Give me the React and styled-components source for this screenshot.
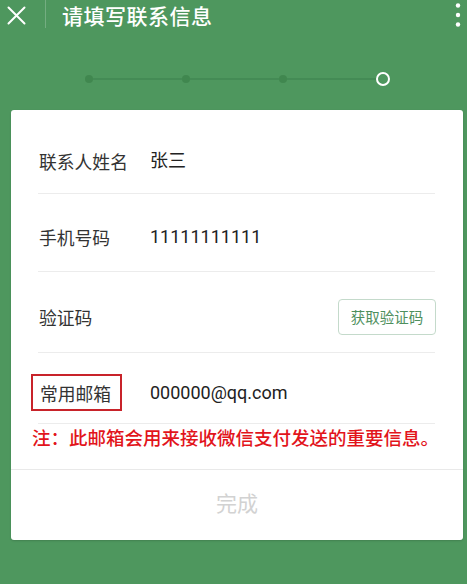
import React from "react"
import styled, { createGlobalStyle } from "styled-components"

const GlobalStyle = createGlobalStyle`
  html, body {
    margin: 0;
    padding: 0;
    background: #4e975e;
  }
  body {
    font-family: "Noto Sans CJK SC", "Noto Sans", sans-serif;
  }
`

const Page = styled.div`
  width: 467px;
  height: 584px;
  background: #4e975e;
  overflow: hidden;
`

const Header = styled.div`
  height: 30px;
  display: flex;
  align-items: center;
  padding-left: 7px;
  padding-right: 6px;
  color: #fff;
`

const CloseButton = styled.div`
  width: 19px;
  height: 19px;
  display: flex;
`

const Separator = styled.div`
  width: 1px;
  height: 28px;
  align-self: flex-start;
  margin-left: 19px;
  background: rgba(255, 255, 255, 0.22);
`

const Title = styled.h1`
  margin: 0 0 0 16px;
  font-size: 21px;
  font-weight: 500;
  line-height: 30px;
  letter-spacing: 0.5px;
`

const MoreButton = styled.div`
  margin-left: auto;
  width: 6px;
  height: 26px;
  display: flex;
`

const Progress = styled.div`
  height: 80px;
  box-sizing: border-box;
  padding-top: 18px;
  display: flex;
  align-items: center;
`

const Steps = styled.div`
  margin-left: 85px;
  width: 305px;
  display: flex;
  align-items: center;
`

const StepDot = styled.div`
  width: 8px;
  height: 8px;
  border-radius: 50%;
  background: #40874f;
  flex-shrink: 0;
`

const StepLine = styled.div`
  flex: 1;
  height: 2px;
  background: #448b55;
`

const StepCurrent = styled.div`
  width: 14px;
  height: 14px;
  box-sizing: border-box;
  border-radius: 50%;
  border: 2.5px solid #fff;
  flex-shrink: 0;
`

const Card = styled.div`
  margin: 0 4px 0 11px;
  background: #fff;
  border-radius: 3px;
  box-shadow: 0 1px 2px rgba(0, 0, 0, 0.15);
  padding-top: 9px;
`

const Row = styled.div`
  height: ${p => p.$height}px;
  box-sizing: border-box;
  margin: 0 28px 0 27px;
  padding: 9px 0 0 1px;
  display: flex;
  align-items: center;
  border-bottom: 1px solid #ececec;
`

const Label = styled.div`
  width: 111px;
  flex-shrink: 0;
  font-size: 17.8px;
  color: #333;
  line-height: 24px;
`

const Marked = styled.span`
  display: inline-block;
  margin-left: -8px;
  padding: 5px 9px 4px 7px;
  border: 2px solid #c8232a;
`

const Value = styled.div`
  font-family: Roboto, "Noto Sans CJK SC", sans-serif;
  font-size: 18px;
  color: #222;
  line-height: 24px;
`

const CodeButton = styled.button`
  margin-left: auto;
  margin-right: -1px;
  width: 98px;
  height: 36px;
  background: #fff;
  border: 1px solid #c4dacb;
  border-radius: 4px;
  font-family: "Noto Sans CJK SC", sans-serif;
  font-size: 14.5px;
  color: #4e8f5d;
  padding: 0;
`

const Note = styled.p`
  margin: 0;
  padding: 0 0 19px 21px;
  font-size: 18.5px;
  line-height: 26px;
  font-weight: 500;
  color: #e2141b;
  border-bottom: 1px solid #e9e9e9;
  letter-spacing: 0;
  white-space: nowrap;
`

const Footer = styled.div`
  height: 70px;
  box-sizing: border-box;
  padding-bottom: 7px;
  display: flex;
  align-items: center;
  justify-content: center;
  font-size: 21px;
  color: #d2d2d2;
`

const CloseIcon = () => (
  <svg width="19" height="19" viewBox="0 0 19 19">
    <path d="M1.5 1.5 L17.5 17.5 M17.5 1.5 L1.5 17.5" stroke="#fff" strokeWidth="2" strokeLinecap="round" />
  </svg>
)

const MoreIcon = () => (
  <svg width="6" height="26" viewBox="0 0 6 26">
    <circle cx="3" cy="3.5" r="2.2" fill="#fff" />
    <circle cx="3" cy="13" r="2.2" fill="#fff" />
    <circle cx="3" cy="22.5" r="2.2" fill="#fff" />
  </svg>
)

const App = () => {
  return (
    <Page>
      <GlobalStyle />
      <Header>
        <CloseButton><CloseIcon /></CloseButton>
        <Separator />
        <Title>请填写联系信息</Title>
        <MoreButton><MoreIcon /></MoreButton>
      </Header>

      <Progress>
        <Steps>
          <StepDot />
          <StepLine />
          <StepDot />
          <StepLine />
          <StepDot />
          <StepLine />
          <StepCurrent />
        </Steps>
      </Progress>

      <Card>
        <Row $height={75}>
          <Label>联系人姓名</Label>
          <Value>张三</Value>
        </Row>
        <Row $height={78}>
          <Label>手机号码</Label>
          <Value>11111111111</Value>
        </Row>
        <Row $height={81}>
          <Label>验证码</Label>
          <CodeButton>获取验证码</CodeButton>
        </Row>
        <Row $height={71}>
          <Label><Marked>常用邮箱</Marked></Label>
          <Value>000000@qq.com</Value>
        </Row>
        <Note>注：此邮箱会用来接收微信支付发送的重要信息。</Note>
        <Footer>完成</Footer>
      </Card>
    </Page>
  )
}

export default App
